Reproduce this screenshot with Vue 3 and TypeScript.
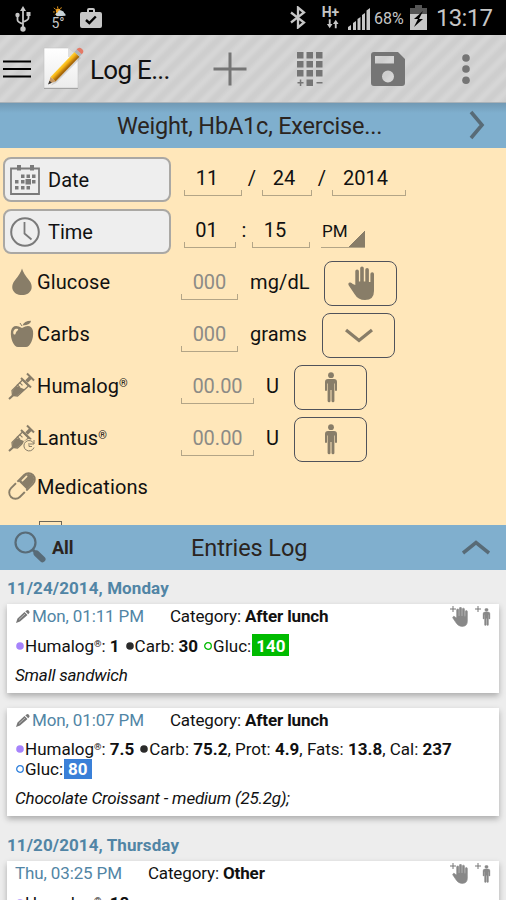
<script setup lang="ts">
interface Field {
  value: string
  width: number
  inset: number
  sep?: string
}
interface Dose {
  icon: string
  label: string
  reg?: boolean
  hint: string
  width: number
  unit: string
  unitWidth: number
  action: string
}
interface Part {
  text: string
  kind?: 'bold' | 'reg' | 'badge' | 'badge tall'
  color?: string
}
interface Entry {
  time: string
  category: string
  pencil: boolean
  tools: boolean
  lines: { dot: string; ring?: boolean; parts: Part[] }[][]
  note?: string
}

const dateFields: Field[] = [
  { value: '11', width: 58, inset: 12, sep: '/' },
  { value: '24', width: 50, inset: 6, sep: '/' },
  { value: '2014', width: 74, inset: 7 },
]
const timeFields: Field[] = [
  { value: '01', width: 52, inset: 7, sep: ':' },
  { value: '15', width: 58, inset: 12 },
]
const doses: Dose[] = [
  { icon: 'drop', label: 'Glucose', hint: '000', width: 57, unit: 'mg/dL', unitWidth: 74, action: 'hand' },
  { icon: 'apple', label: 'Carbs', hint: '000', width: 57, unit: 'grams', unitWidth: 72, action: 'down' },
  { icon: 'syringe', label: 'Humalog', reg: true, hint: '00.00', width: 73, unit: 'U', unitWidth: 28, action: 'person' },
  { icon: 'syringe-clock', label: 'Lantus', reg: true, hint: '00.00', width: 73, unit: 'U', unitWidth: 28, action: 'person' },
]
const purple = '#a683fb'
const dark = '#2b2b2b'
const days: { title: string; entries: Entry[] }[] = [
  {
    title: '11/24/2014, Monday',
    entries: [
      {
        time: 'Mon, 01:11 PM', category: 'After lunch', pencil: true, tools: true, note: 'Small sandwich',
        lines: [[
          { dot: purple, parts: [{ text: 'Humalog' }, { text: '®', kind: 'reg' }, { text: ': ' }, { text: '1', kind: 'bold' }] },
          { dot: dark, parts: [{ text: 'Carb: ' }, { text: '30', kind: 'bold' }] },
          { dot: '#00b900', ring: true, parts: [{ text: 'Gluc:' }, { text: '140', kind: 'badge tall', color: '#00bb00' }] },
        ]],
      },
      {
        time: 'Mon, 01:07 PM', category: 'After lunch', pencil: true, tools: false, note: 'Chocolate Croissant - medium (25.2g);',
        lines: [
          [
            { dot: purple, parts: [{ text: 'Humalog' }, { text: '®', kind: 'reg' }, { text: ': ' }, { text: '7.5', kind: 'bold' }] },
            { dot: dark, parts: [
              { text: 'Carb: ' }, { text: '75.2', kind: 'bold' }, { text: ', Prot: ' }, { text: '4.9', kind: 'bold' },
              { text: ', Fats: ' }, { text: '13.8', kind: 'bold' }, { text: ', Cal: ' }, { text: '237', kind: 'bold' },
            ] },
          ],
          [{ dot: '#2f80dc', ring: true, parts: [{ text: 'Gluc:' }, { text: '80', kind: 'badge', color: '#3a80d8' }] }],
        ],
      },
    ],
  },
  {
    title: '11/20/2014, Thursday',
    entries: [
      {
        time: 'Thu, 03:25 PM', category: 'Other', pencil: false, tools: true,
        lines: [[{ dot: purple, parts: [{ text: 'Humalog' }, { text: '®', kind: 'reg' }, { text: ': ' }, { text: '18', kind: 'bold' }] }]],
      },
    ],
  },
]
</script>

<template>
  <div class="screen">
    <svg class="sprite" aria-hidden="true">
      <symbol id="hand" viewBox="0 0 28 35">
        <path d="M7.300 19V5.200a1.800 1.800 0 0 1 3.600 0V15.600h1.300V2.300a1.800 1.800 0 0 1 3.600 0V15.600h1.500V3.800a1.800 1.800 0 0 1 3.600 0V16h1.500V8a1.800 1.800 0 0 1 3.600 0V25q0 9-9 9-7 0-10.500-6L.8 19.500q-1.200-2.300.8-3 1.700-.5 3.200 1.400Z" />
      </symbol>
      <symbol id="person" viewBox="0 0 14 31">
        <circle cx="7" cy="3.200" r="2.900" />
        <path d="M4 7h6q3 0 3 3v8q0 1-1 1t-1-1v-6.500h-.6V29q0 1.200-1.400 1.200T7.500 29V18h-1v11q0 1.200-1.400 1.200T3.600 29V11.500H3V18q0 1-1 1t-1-1v-8q0-3 3-3Z" />
      </symbol>
      <symbol id="down" viewBox="0 0 28 15"><path d="M1 2 14 12.500 27 2" fill="none" stroke="currentColor" stroke-width="3.300" /></symbol>
      <symbol id="drop" viewBox="0 0 28 28"><path d="M14 .5Q15.500 5.500 20.500 11.500C27 19 23 27 14 27S1 19 7.500 11.500Q12.500 5.500 14 .5Z" /></symbol>
      <symbol id="apple" viewBox="0 0 28 28">
        <path fill-rule="evenodd" d="M14 8Q5 3 3 11c-1 8 3 16 7 16h8c4 0 8-8 7-16Q23 3 14 8ZM5.500 14c-1-4 2-6 4.500-5 1 1-2 2-2.500 5q-.8 1-2 0Z" />
        <path d="M14.500 5.500Q16 1 23 .8 23 5 14.500 5.500Z" /><path d="m12 3 2 3" stroke="currentColor" />
      </symbol>
      <symbol id="syringe" viewBox="0 0 28 28">
        <path d="m1 27 5-4.500M19 1.500l7 7M13 6l10 9.500" fill="none" stroke="currentColor" stroke-width="2" />
        <path d="m14.500 8 6 6L9.500 24l-5-.5-.5-5Z" fill="none" stroke="currentColor" stroke-width="1.300" />
        <path d="m8.500 14 8.500 3.500-8 6-4-.5-.5-4Z" /><path d="m18.500 9.500 4.500-4.500" stroke="currentColor" stroke-width="3.600" />
        <path d="m9 12.500 3 3m-.5-5.200 3 3" stroke="currentColor" stroke-width="1.200" />
      </symbol>
      <symbol id="syringe-clock" viewBox="0 0 28 28">
        <use href="#syringe" /><circle cx="21" cy="22" r="6.800" fill="#ffe7ba" />
        <path d="M25.800 19.500a5.200 5.200 0 1 0 .2 4M26 16v4h-4M21 19v3.500h3" fill="none" stroke="currentColor" stroke-width="1" />
      </symbol>
      <symbol id="pill" viewBox="0 0 28 28">
        <g transform="rotate(-45 14 14)">
          <rect x="-1.500" y="7.800" width="31" height="12.400" rx="6.200" fill="none" stroke="currentColor" stroke-width="1.900" />
          <path d="M15 8.500h8.300a5.500 5.500 0 0 1 0 11H15Z" />
          <path d="M12.800 6v16" stroke="#ffe7ba" stroke-width="2" />
          <path d="M18 10.500h6" stroke="#ffe7ba" stroke-width="1.700" stroke-linecap="round" />
        </g>
      </symbol>
    </svg>

    <header class="status">
      <svg class="usb" viewBox="0 0 16 26"><g fill="none" stroke="#c6c6c6" stroke-width="1.800"><path d="M8 4v18M2.500 10v4q0 2 5.500 4M13.500 8v4q0 2-5.500 4" /></g><g fill="#c6c6c6"><path d="m8 0 3 5H5Z" /><circle cx="8" cy="23" r="2.700" /><circle cx="2.500" cy="9" r="2.200" /><path d="M11.500 6h4v4h-4z" /></g></svg>
      <div class="weather">
        <svg viewBox="0 0 14 11"><g stroke="#f0a020" stroke-width="1"><path d="M5 0v2M1 1.500l2 2M0 6h2M9 1 8 3M2 9l2-1.500" /></g><circle cx="5.500" cy="5" r="2.600" fill="#f0a020" /><path d="M5 10.500a2 2 0 0 1 0-4q1-3 4-2t3 2.500q2 .5 1.500 3Z" fill="#c9d4d8" /></svg>
        <span>5°</span>
      </div>
      <svg class="bag" viewBox="0 0 22 20"><path fill="#c6c6c6" fill-rule="evenodd" d="M2 4h5V2q0-2 2-2h4q2 0 2 2v2h5q2 0 2 2v12q0 2-2 2H2q-2 0-2-2V6q0-2 2-2Zm7 0h4V2H9Z" /><path d="m6 12 3.300 3 6.500-6.500" fill="none" stroke="#000" stroke-width="2.400" /></svg>
      <span class="spacer"></span>
      <svg class="bt" viewBox="0 0 16 22"><path d="m1 6 13 10-6 5V1l6 5L1 16" fill="none" stroke="#c6c6c6" stroke-width="2.300" /></svg>
      <div class="net"><b>H+</b><svg viewBox="0 0 14 10"><path d="M1 5h2V0h2v5h2L4 9.500ZM7.500 5 10.500.500 13.500 5h-2v4.500h-2V5Z" fill="#c6c6c6" /></svg></div>
      <svg class="signal" viewBox="0 0 22 22"><path d="M0 22v-3l3-2v5ZM5 22v-7l3-2v9ZM9.500 22V11l3-2v13ZM14 22V7l3-2v17ZM18.500 22V2.500L22 0v22Z" fill="#c6c6c6" /></svg>
      <span class="pct">68%</span>
      <svg class="battery" viewBox="0 0 17 25"><path d="M0 3h5V0h7v3h5v6H0Z" fill="#555" /><path d="M0 9h17v16H0Z" fill="#c6c6c6" /><path d="m13 6-9 8h4l-4 8 9-8H9Z" fill="#000" /></svg>
      <span class="clock">13:17</span>
    </header>

    <nav class="bar">
      <svg class="menu" viewBox="0 0 28 18"><path d="M0 1.500h28M0 9h28M0 16.500h28" stroke="#000" stroke-width="2" /></svg>
      <svg class="logo" viewBox="0 0 42 44">
        <defs>
          <linearGradient id="paper" x2="0" y2="1"><stop stop-color="#fff" /><stop offset="1" stop-color="#ececec" /></linearGradient>
          <linearGradient id="wood" gradientUnits="userSpaceOnUse" x1="19" y1="16" x2="24" y2="21"><stop stop-color="#ffe04a" /><stop offset=".5" stop-color="#f8b617" /><stop offset="1" stop-color="#a8680a" /></linearGradient>
        </defs>
        <path d="M1 2h24l10 9v31H1Z" fill="#999" /><path d="M1 1h24l10 9v31H1Z" fill="url(#paper)" stroke="#c4c4c4" stroke-width=".6" /><path d="M25 1v9h10Z" fill="#dedede" />
        <path d="m9 37 25-29 4 3-25 25-5 2.500Z" fill="#999" opacity=".35" />
        <path d="M7.500 30 31.500 5l5 4.800L12.500 34.500Z" fill="url(#wood)" /><path d="m7.500 30 5 4.500L5.500 37Z" fill="#c79964" /><path d="m6.500 33.700 2.300 2L5 37.500Z" fill="#333" />
        <path d="m31.500 5 2.200-2.500 5 4.800-2.200 2.500Z" fill="#aeb4b8" /><path d="m33.700 2.500 1-1q2-1.500 4.300.5t.700 4.300l-1 1Z" fill="#e47a66" />
      </svg>
      <h1>Log E...</h1>
      <svg class="plus" viewBox="0 0 34 34"><path d="M17 .5v33M.5 17h33" stroke="#757575" stroke-width="3" /></svg>
      <svg class="grid" viewBox="0 0 26 34"><g fill="#757575"><path d="M0 0h6.500v6.500H0zM9.500 0H16v6.500H9.500zM19 0h6.500v6.500H19zM0 9h6.500v6.500H0zM9.500 9H16v6.500H9.500zM19 9h6.500v6.500H19zM0 18h6.500v6.500H0zM9.500 18H16v6.500H9.500zM19 18h6.500v6.500H19zM9.500 27.500H16V34H9.500zM.5 30h6v1.500h-6zM19.500 30h6v1.500h-6zM2.800 27.500h1.500v6.500H2.800z" /></g></svg>
      <svg class="save" viewBox="0 0 34 34"><path fill="#757575" fill-rule="evenodd" d="M3 0h24l7 7v24q0 3-3 3H3q-3 0-3-3V3q0-3 3-3ZM4 4v7.500h19V4ZM17 18.500a6 6 0 1 0 0 12 6 6 0 0 0 0-12Z" /></svg>
      <svg class="more" viewBox="0 0 8 30"><g fill="#757575"><circle cx="4" cy="4" r="3.800" /><circle cx="4" cy="15" r="3.800" /><circle cx="4" cy="26.200" r="3.800" /></g></svg>
    </nav>

    <div class="strip top">
      <span class="strip-title">Weight, HbA1c, Exercise...</span>
      <svg class="next" viewBox="0 0 16 30"><path d="m2 2 11 13L2 28" fill="none" stroke="#586b77" stroke-width="3.600" /></svg>
    </div>

    <main class="form">
      <div class="row">
        <button class="pick">
          <svg viewBox="0 0 30 30"><path d="M1 3.500h28v25.500H1Z" fill="none" stroke="#7a7a7a" stroke-width="1.800" /><g fill="#7a7a7a"><path d="M7 0h4v5.500H7zM20 0h4v5.500h-4zM11 9.500h3.500V13H11zM16.500 9.500H20V13h-3.500zM22 9.500h3.500V13H22zM5 15h3.500v3.500H5zM11 15h3.500v3.500H11zM15.500 14h5.500v5.500h-5.500zM22 15h3.500v3.500H22zM5 21h3.500v3.500H5zM11 21h3.500v3.500H11zM16.500 21H20v3.500h-3.500z" /></g></svg>
          <span>Date</span>
        </button>
        <div class="fields">
          <template v-for="f in dateFields" :key="f.value">
            <span class="field" :style="{ width: f.width + 'px', paddingRight: f.inset + 'px' }">{{ f.value }}</span>
            <span v-if="f.sep" class="sep">{{ f.sep }}</span>
          </template>
        </div>
      </div>
      <div class="row">
        <button class="pick">
          <svg viewBox="0 0 30 30"><circle cx="15" cy="15" r="13.800" fill="none" stroke="#7a7a7a" stroke-width="2" /><path d="M14.500 5v11.500l7 6" fill="none" stroke="#7a7a7a" stroke-width="1.800" /></svg>
          <span>Time</span>
        </button>
        <div class="fields time">
          <template v-for="f in timeFields" :key="f.value">
            <span class="field" :style="{ width: f.width + 'px', paddingRight: f.inset + 'px' }">{{ f.value }}</span>
            <span v-if="f.sep" class="sep">{{ f.sep }}</span>
          </template>
          <span class="ampm">PM</span>
        </div>
      </div>
      <div v-for="d in doses" :key="d.label" class="row dose">
        <svg class="dose-icon"><use :href="'#' + d.icon" /></svg>
        <span class="label">{{ d.label }}<sup v-if="d.reg">®</sup></span>
        <span class="field hint" :style="{ width: d.width + 'px' }">{{ d.hint }}</span>
        <span class="unit" :style="{ width: d.unitWidth + 'px' }">{{ d.unit }}</span>
        <button class="act"><svg :class="d.action"><use :href="'#' + d.action" /></svg></button>
      </div>
      <div class="row dose meds">
        <svg class="dose-icon"><use href="#pill" /></svg>
        <span class="label">Medications</span>
      </div>
      <div class="drug"><span class="box"></span><span class="drug-name">Ramipril am dose</span></div>
    </main>

    <div class="strip log">
      <svg class="search" viewBox="0 0 32 32"><circle cx="11.500" cy="11.500" r="10" fill="none" stroke="#586b77" stroke-width="2.200" /><path d="m18.500 18.500 4 4" stroke="#586b77" stroke-width="3" /><path d="m22.500 22.500 6 5.700" stroke="#586b77" stroke-width="6" stroke-linecap="round" /></svg>
      <b>All</b>
      <span class="strip-title">Entries Log</span>
      <svg class="up" viewBox="0 0 28 15"><path d="M1 13 14 2.500 27 13" fill="none" stroke="#586b77" stroke-width="3.600" /></svg>
    </div>

    <section class="list">
      <div v-for="day in days" :key="day.title" class="day">
        <h2>{{ day.title }}</h2>
        <article v-for="e in day.entries" :key="e.time" class="card">
          <div class="head">
            <svg v-if="e.pencil" class="pencil" viewBox="0 0 14 13"><path d="m0 13 1.500-4.500L8.500 2l3 3-7.500 6.500ZM9.300 1.300 10.500.400Q12-.5 13 1t.3 2L12.200 4.200Z" fill="#777" /><path d="m3 9.500 6-5.500" stroke="#bbb" /></svg>
            <span class="when">{{ e.time }}</span>
            <span class="cat">Category: <b>{{ e.category }}</b></span>
            <span v-if="e.tools" class="tools">
              <svg class="mini-plus" viewBox="0 0 6 6"><path d="M3 0v6M0 3h6" stroke="#777" /></svg>
              <svg class="mini-hand"><use href="#hand" /></svg>
              <svg class="mini-plus second" viewBox="0 0 6 6"><path d="M3 0v6M0 3h6" stroke="#777" /></svg>
              <svg class="mini-person"><use href="#person" /></svg>
            </span>
          </div>
          <div class="lines" :class="{ single: e.lines.length === 1 }">
            <div v-for="(line, i) in e.lines" :key="i" class="line">
              <span v-for="(item, j) in line" :key="j" class="item">
                <svg class="dot" viewBox="0 0 8 8"><circle cx="4" cy="4" :r="item.ring ? 3.300 : 3.800" :fill="item.ring ? 'none' : item.dot" :stroke="item.ring ? item.dot : 'none'" stroke-width="1.300" /></svg>
                <span><span v-for="(p, k) in item.parts" :key="k" :class="p.kind" :style="{ backgroundColor: p.color }">{{ p.text }}</span></span>
              </span>
            </div>
          </div>
          <p v-if="e.note" class="note">{{ e.note }}</p>
        </article>
      </div>
    </section>
  </div>
</template>

<style>
body { margin: 0; overflow: hidden; }
</style>

<style scoped>
.screen { width: 506px; height: 900px; overflow: hidden; display: flex; flex-direction: column; background: #ededed; color: #111; font-family: Roboto, "Liberation Sans", sans-serif; }
.screen * { box-sizing: border-box; }
.sprite { display: none; }
svg { flex: none; fill: currentColor; }
button { font: inherit; color: inherit; padding: 0; }

.status { flex: none; height: 35px; background: #000; color: #c6c6c6; display: flex; align-items: center; padding: 0 12px 0 15px; }
.usb { width: 16px; height: 26px; margin-top: 2px; }
.weather { width: 16px; height: 26px; margin-left: 19px; margin-top: 3px; display: flex; flex-direction: column; align-items: center; }
.weather svg { width: 13px; height: 11px; margin-left: 3px; }
.weather span { font-size: 14px; line-height: 13px; }
.bag { width: 22px; height: 20px; margin-left: 14px; }
.spacer { flex: 1; }
.bt { width: 16px; height: 23px; }
.net { width: 19px; margin-left: 15px; display: flex; flex-direction: column; align-items: center; }
.net b { font-size: 14px; line-height: 13px; }
.net svg { width: 13px; height: 10px; margin-left: 3px; }
.signal { width: 22px; height: 22px; margin-left: 8px; margin-top: 2px; }
.pct { width: 32px; margin-left: 4px; font-size: 16px; margin-top: 2px; }
.battery { width: 17px; height: 25px; margin-left: 4px; }
.clock { width: 58px; margin-left: 9px; font-size: 24px; white-space: nowrap; letter-spacing: -.7px; }

.bar { flex: none; height: 68px; display: flex; align-items: center; padding: 0 36px 0 3px; background: repeating-linear-gradient(135deg, #cecece 0 3px, #d6d6d6 7px 9px, #cecece 13px); border-bottom: 1px solid #aab2b8; }
.menu { width: 28px; height: 18px; }
.logo { width: 42px; height: 44px; margin-left: 12px; }
.bar h1 { width: 84px; margin: 0 0 0 5px; font-size: 26px; line-height: 36px; font-weight: 400; white-space: nowrap; padding-top: 2px; letter-spacing: -.7px; }
.plus { width: 34px; height: 34px; margin-left: 39px; }
.grid { width: 26px; height: 34px; margin-left: 50px; }
.save { width: 34px; height: 34px; margin-left: 48px; }
.more { width: 8px; height: 30px; margin-left: auto; }

.strip { flex: none; height: 45px; background: #80afce; color: #2b2420; display: flex; align-items: center; }
.strip-title { font-size: 23.500px; line-height: 43px; padding-top: 2px; white-space: nowrap; letter-spacing: -.1px; }
.top { padding: 0 21px 0 117px; justify-content: space-between; background: linear-gradient(#7199b4, #7fafce 10px); }
.top .strip-title { letter-spacing: -.2px; }
.next { width: 16px; height: 30px; margin-top: -1px; }

.form { flex: none; height: 377px; overflow: hidden; padding: 9px 0 0 3px; background: #ffe7ba; display: flex; flex-direction: column; gap: 8px; font-size: 20px; }
.row { flex: none; height: 44px; display: flex; }
.pick { width: 168px; height: 45px; border: 2px solid #aaa8a4; border-radius: 8px; background: #eee; display: flex; align-items: center; padding-left: 5px; gap: 8px; text-align: left; }
.pick svg { width: 30px; height: 30px; }
.fields { display: flex; margin-left: 13px; }
.field { flex: none; position: relative; height: 39px; border-bottom: 1px solid #b3a587; line-height: 42px; text-align: center; color: #111; }
.field::before, .field::after { content: ""; position: absolute; bottom: 0; width: 1px; height: 5px; background: #b3a587; }
.field::before { left: 0; }
.field::after { right: 0; }
.sep { width: 20px; text-align: center; line-height: 42px; }
.time .sep { width: 16px; }
.ampm { width: 44px; height: 39px; margin-left: 11px; padding-left: 1px; font-size: 17px; line-height: 44px; border-bottom: 1px solid #b3a587; background: linear-gradient(135deg, transparent 50%, #887d68 50%) right bottom / 16px 16px no-repeat; }
.dose-icon { width: 28px; height: 28px; margin: 7px 0 0 5px; color: #887d68; }
.label { width: 144px; margin-left: 1px; line-height: 42px; white-space: nowrap; letter-spacing: .12px; }
.label sup { font-size: 11px; line-height: 0; vertical-align: 6px; }
.hint { color: #8c8b86; }
.unit { margin-left: 12px; line-height: 42px; letter-spacing: .12px; }
.act { width: 73px; height: 45px; border: 1.500px solid #50525a; border-radius: 8px; background: transparent; color: #887d68; display: flex; align-items: center; justify-content: center; }
.act .hand { width: 28px; height: 35px; margin-left: 2px; }
.act .down { width: 28px; height: 15px; }
.act .person { width: 14px; height: 31px; }
.meds { margin-top: -4px; height: 46px; }
.meds .label { line-height: 44px; }
.drug { display: flex; gap: 3px; padding-left: 36px; }
.box { flex: none; width: 23px; height: 23px; margin-top: 2px; border: 1.500px solid #6c6759; }
.drug-name { line-height: 24px; margin-top: 2px; white-space: nowrap; }

.log { padding: 0 16px 0 14px; }
.search { width: 32px; height: 32px; margin-top: -1px; }
.log b { width: 139px; margin-left: 6px; font-size: 18px; }
.up { width: 28px; height: 15px; margin-left: auto; }

.list { flex: 1; overflow: hidden; font-size: 17px; line-height: 20px; letter-spacing: -.13px; }
.day h2 { margin: 0; padding: 4px 0 6px 7px; font-size: 17px; line-height: 20px; color: #5185a5; letter-spacing: .09px; }
.day:first-child h2 { padding-top: 8px; }
.card { width: 492px; margin: 0 0 15px 7px; padding: 2px 8px 8px; background: #fff; box-shadow: 0 3px 6px rgba(0, 0, 0, .28); }
.head { display: flex; height: 20px; white-space: nowrap; }
.pencil { width: 14px; height: 13px; margin: 4px 2px 0 1px; }
.when { color: #5185a5; }
.cat { margin-left: 26px; }
.tools { display: flex; margin-left: auto; color: #888; }
.mini-plus { width: 6px; height: 6px; }
.mini-hand { width: 17px; height: 20px; margin: 1px 0 0 -4px; stroke: currentColor; stroke-width: 1; }
.second { margin-left: 6px; }
.mini-person { width: 9px; height: 18px; margin: 2px 0 0 1px; stroke: currentColor; stroke-width: .6; }
.lines { margin-top: 9px; letter-spacing: 0; }
.single { padding-top: 1px; }
.line { display: flex; gap: 6px; white-space: pre; }
.item { display: flex; }
.dot { width: 8px; height: 8px; margin: 6px 1px 0 0; }
.item:first-child .dot { margin-left: 1px; }
.bold { font-weight: 700; }
.reg { font-size: 9.500px; line-height: 0; vertical-align: 5px; }
.badge { display: inline-block; padding: 0 4px; margin-left: 1px; color: #fff; font-weight: 700; }
.tall { padding-top: 2px; margin-top: -2px; }
.note { margin: 9px 0 0; font-style: italic; letter-spacing: -.2px; }
</style>
